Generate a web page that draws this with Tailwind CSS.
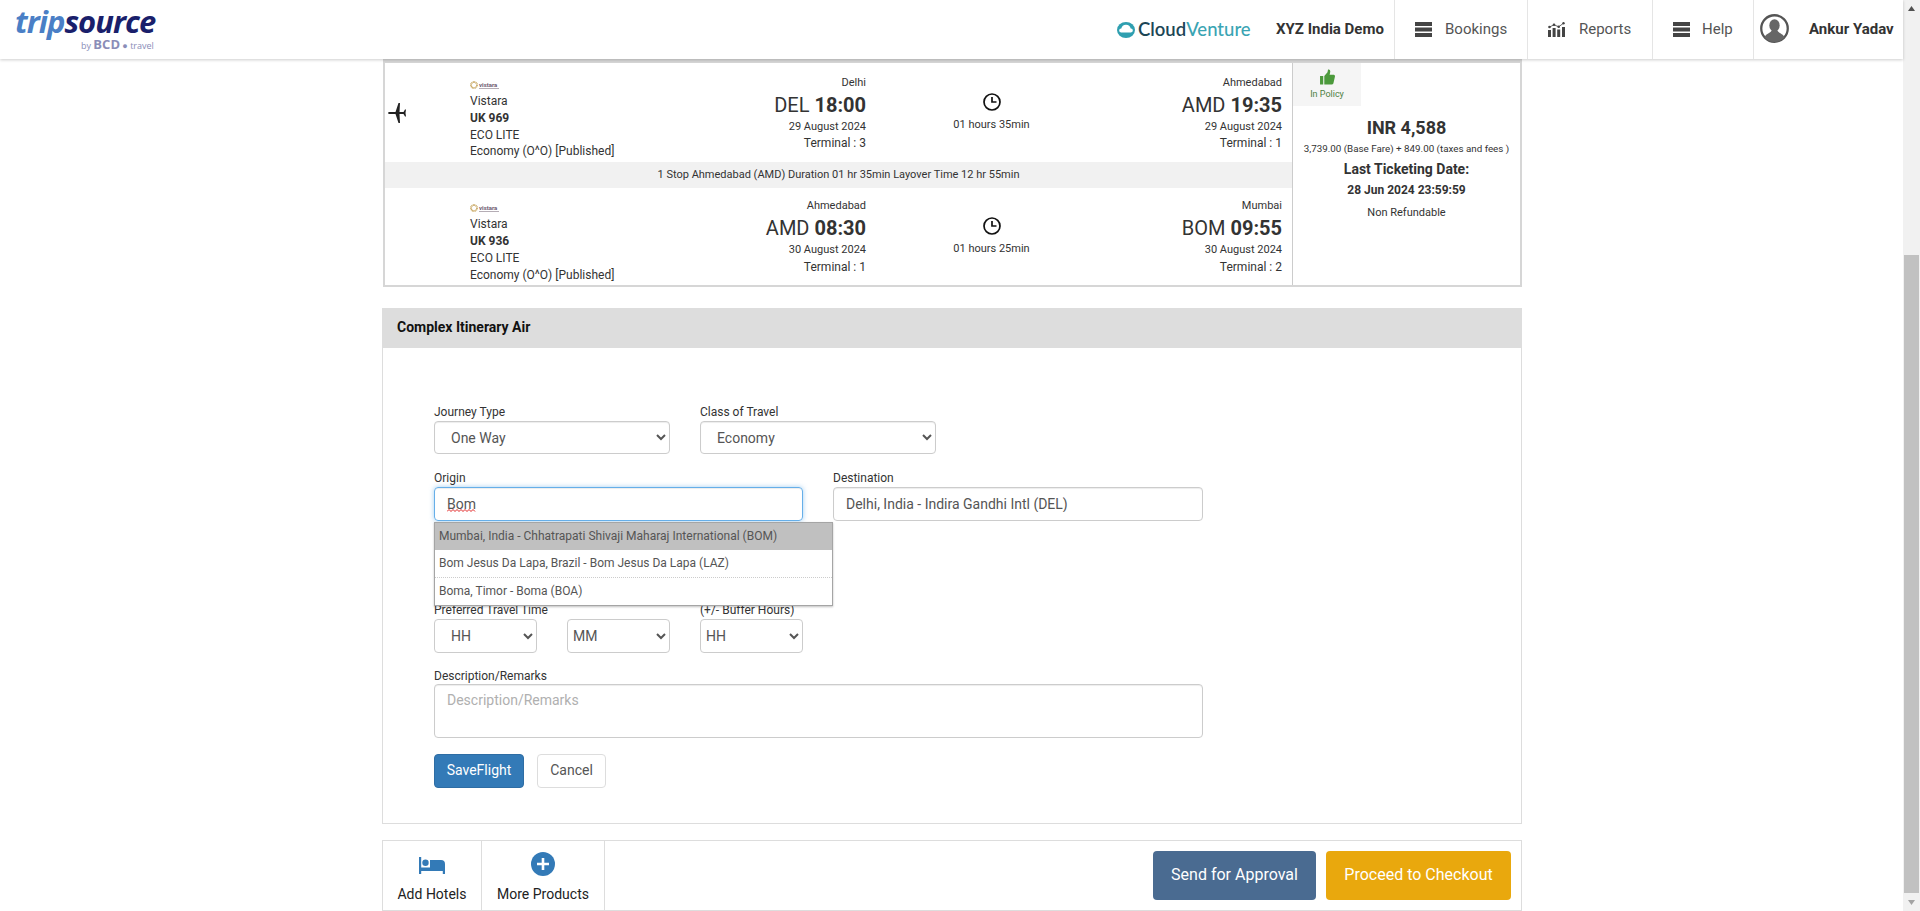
<!doctype html>
<html><head><meta charset="utf-8"><script src="https://cdn.jsdelivr.net/npm/@tailwindcss/browser@4"></script></head>
<body class="bg-white font-['Roboto',sans-serif] text-[#333] overflow-hidden">
<div class="h-[911px] w-[1920px] flex overflow-hidden">
<div class="w-[1903px] h-[911px] flex flex-col">
  <header class="h-[59px] shrink-0 flex shadow-[0_1px_3px_rgba(0,0,0,0.2)] bg-white relative z-10">
    <div class="ml-[15px] w-[140px] pt-[1px] flex flex-col">
      <div class="font-['Open_Sans'] italic font-bold text-[31px] leading-[40px] tracking-[-1px] text-[#1a1f6b] whitespace-nowrap"><span class="text-[#4a7fc6]">trip</span>source</div>
      <div class="text-[9px] leading-[10px] mt-[-2px] ml-[66px] text-[#8a8db8] font-['Open_Sans'] whitespace-nowrap">by <b class="text-[13px]">BCD</b> ● travel</div>
    </div>
    <div class="ml-auto flex items-center h-full">
      <svg class="w-[18px] h-[16px] mr-[3px]" viewBox="0 0 18 16"><ellipse cx="9" cy="8" rx="9" ry="8" fill="#2f9fb0"/><path d="M4 10.500a2 2 0 0 1 .3-4 4.800 4.800 0 0 1 9.400 0 2 2 0 0 1 .3 4z" fill="#fff"/></svg>
      <span class="font-['Lato'] font-semibold text-[18.500px] leading-none text-[#1c4656] w-[122px] whitespace-nowrap">Cloud<span class="text-[#3aa4b3] font-medium">Venture</span></span>
      <span class="ml-[16px] w-[118px] font-bold text-[15px] text-[#333] whitespace-nowrap">XYZ India Demo</span>
      <div class="h-full w-[133px] border-l border-[#e5e5e5] flex items-center pl-[20px] text-[15px] text-[#555]"><svg class="w-[17px] h-[15px] mr-[13px]" viewBox="0 0 17 15" fill="#444"><rect width="17" height="4"/><rect y="5.500" width="17" height="4"/><rect y="11" width="17" height="4"/></svg>Bookings</div>
      <div class="h-full w-[125px] border-l border-[#e5e5e5] flex items-center pl-[20px] text-[15px] text-[#555]"><svg class="w-[17px] h-[15px] mr-[14px]" viewBox="0 0 17 15" fill="#444"><rect y="8" width="3" height="7"/><rect x="4.600" y="6" width="3" height="9"/><rect x="9.200" y="7.500" width="3" height="7.500"/><rect x="14" y="5" width="3" height="10"/><path d="M1.500 5 6 2.800 10.700 4.800 15.500 1.200" fill="none" stroke="#444" stroke-width=".8"/><circle cx="1.500" cy="5" r="1.300"/><circle cx="6" cy="2.800" r="1.300"/><circle cx="10.700" cy="4.800" r="1.300"/><circle cx="15.500" cy="1.200" r="1.200"/></svg>Reports</div>
      <div class="h-full w-[101px] border-l border-[#e5e5e5] flex items-center pl-[20px] text-[15px] text-[#555]"><svg class="w-[17px] h-[15px] mr-[12px]" viewBox="0 0 17 15" fill="#444"><rect width="17" height="4"/><rect y="5.500" width="17" height="4"/><rect y="11" width="17" height="4"/></svg>Help</div>
      <div class="h-full w-[150px] border-l border-[#e5e5e5] flex items-center pl-[6px]"><svg class="w-[29px] h-[29px] mr-[20px] mt-[-2px]" viewBox="0 0 28 28"><circle cx="14" cy="14" r="12.800" fill="#fff" stroke="#555" stroke-width="2.200"/><ellipse cx="14" cy="11" rx="5" ry="6" fill="#666"/><path d="M4.300 22.500C6 18.500 11 18.500 11.500 15h5C17 18.500 22 18.500 23.700 22.500A12.800 12.800 0 0 1 4.300 22.500z" fill="#666"/></svg><span class="font-bold text-[15px] text-[#333] whitespace-nowrap">Ankur Yadav</span></div>
    </div>
  </header>

  <main class="w-[1140px] ml-[382px] flex flex-col">
    <!-- flight card -->
    <div class="h-[228px] ml-[1px] w-[1139px] border-2 border-t-[4px] border-[#d6d6d6] flex">
      <div class="w-[907px] flex flex-col">
        <!-- leg 1 -->
        <div class="h-[99px] flex">
          <div class="w-[85px] pl-[3px] flex items-center"><svg class="w-[19px] h-[20px]" viewBox="0 0 19 20" fill="#222"><path d="M0 10C0 9.300 1 9 2 9H7.500L10.500 0H12L11.500 9H15.500L17 6.500H18L17.500 10L18 13.500H17L15.500 11H11.500L12 20H10.500L7.500 11H2C1 11 0 10.700 0 10z"/></svg></div>
          <div class="w-[310px] pt-[16px] text-[12px] leading-[16.600px]">
            <div class="h-[12px] flex items-center gap-[1px]"><svg class="w-[8px] h-[8px]" viewBox="0 0 8 8"><circle cx="4" cy="4" r="3" fill="none" stroke="#c9a864" stroke-width="1.800" stroke-dasharray="1 .4"/></svg><div class="flex flex-col"><span class="text-[6px] leading-[5px] text-[#6d5a70] font-bold">vistara</span><span class="h-px mt-[1px] w-[20px] bg-[#b5adb5]"></span></div></div>
            <div class="mt-[2.400px]">Vistara</div><div class="font-bold">UK 969</div><div>ECO LITE</div><div class="whitespace-nowrap">Economy (O^O) [Published]</div>
          </div>
          <div class="w-[86px] pt-[12px] text-right whitespace-nowrap flex flex-col items-end">
            <div class="text-[11px] leading-[15px]">Delhi</div>
            <div class="text-[20px] leading-[30px]">DEL <b>18:00</b></div>
            <div class="text-[11px] leading-[14px]">29 August 2024</div>
            <div class="text-[12px] leading-[18px]">Terminal : 3</div>
          </div>
          <div class="w-[251px] pt-[30px] flex flex-col items-center">
            <svg class="w-[18px] h-[18px]" viewBox="0 0 18 18" fill="none" stroke="#111" stroke-width="1.700"><circle cx="9" cy="9" r="8"/><path d="M9 4v5h4.500"/></svg>
            <div class="mt-[6px] text-[11px] leading-[16px]">01 hours 35min</div>
          </div>
          <div class="w-[165px] pt-[12px] text-right whitespace-nowrap">
            <div class="text-[11px] leading-[15px]">Ahmedabad</div>
            <div class="text-[20px] leading-[30px]">AMD <b>19:35</b></div>
            <div class="text-[11px] leading-[14px]">29 August 2024</div>
            <div class="text-[12px] leading-[18px]">Terminal : 1</div>
          </div>
        </div>
        <div class="h-[26px] bg-[#f1f1f1] flex items-center justify-center text-[11px] whitespace-nowrap">1 Stop Ahmedabad (AMD) Duration 01 hr 35min Layover Time 12 hr 55min</div>
        <!-- leg 2 -->
        <div class="h-[97px] flex">
          <div class="w-[85px]"></div>
          <div class="w-[310px] pt-[14px] text-[12px] leading-[16.800px]">
            <div class="h-[12px] flex items-center gap-[1px]"><svg class="w-[8px] h-[8px]" viewBox="0 0 8 8"><circle cx="4" cy="4" r="3" fill="none" stroke="#c9a864" stroke-width="1.800" stroke-dasharray="1 .4"/></svg><div class="flex flex-col"><span class="text-[6px] leading-[5px] text-[#6d5a70] font-bold">vistara</span><span class="h-px mt-[1px] w-[20px] bg-[#b5adb5]"></span></div></div>
            <div class="mt-[2.400px]">Vistara</div><div class="font-bold">UK 936</div><div>ECO LITE</div><div class="whitespace-nowrap">Economy (O^O) [Published]</div>
          </div>
          <div class="w-[86px] pt-[10px] text-right whitespace-nowrap flex flex-col items-end">
            <div class="text-[11px] leading-[16px]">Ahmedabad</div>
            <div class="text-[20px] leading-[28px]">AMD <b>08:30</b></div>
            <div class="text-[11px] leading-[16px]">30 August 2024</div>
            <div class="text-[12px] leading-[18px]">Terminal : 1</div>
          </div>
          <div class="w-[251px] pt-[29px] flex flex-col items-center">
            <svg class="w-[18px] h-[18px]" viewBox="0 0 18 18" fill="none" stroke="#111" stroke-width="1.700"><circle cx="9" cy="9" r="8"/><path d="M9 4v5h4.500"/></svg>
            <div class="mt-[6px] text-[11px] leading-[16px]">01 hours 25min</div>
          </div>
          <div class="w-[165px] pt-[10px] text-right whitespace-nowrap">
            <div class="text-[11px] leading-[16px]">Mumbai</div>
            <div class="text-[20px] leading-[28px]">BOM <b>09:55</b></div>
            <div class="text-[11px] leading-[16px]">30 August 2024</div>
            <div class="text-[12px] leading-[18px]">Terminal : 2</div>
          </div>
        </div>
      </div>
      <!-- price -->
      <div class="flex-1 border-l border-[#ccc] flex flex-col">
        <div class="w-[68px] h-[43px] bg-[#f5f5f5] flex flex-col items-center pt-[6px]">
          <svg class="w-[15px] h-[16px]" viewBox="0 0 14 15" fill="#4c9a3c"><path d="M0 6.500h3v8H0zM4 6.500 7 3l.5-2.500Q10 0 9.500 3L9 5.500h4q1.500.5.8 2.500l-1.300 5.500q-.5 1-1.500 1H4z"/></svg>
          <div class="text-[9px] leading-[12px] mt-[3px] text-[#4d7f3f] whitespace-nowrap">In Policy</div>
        </div>
        <div class="flex flex-col items-center whitespace-nowrap">
          <div class="mt-[9px] text-[18px] leading-[26px] font-bold">INR 4,588</div>
          <div class="mt-[1px] text-[9.800px] leading-[14px]">3,739.00 (Base Fare) + 849.00 (taxes and fees )</div>
          <div class="mt-[3px] text-[14px] leading-[20px] font-bold">Last Ticketing Date:</div>
          <div class="mt-[1px] text-[12px] leading-[20px] font-bold">28 Jun 2024 23:59:59</div>
          <div class="mt-[5px] text-[11px] leading-[16px]">Non Refundable</div>
        </div>
      </div>
    </div>

    <!-- section -->
    <section class="mt-[21px] flex flex-col">
      <div class="h-[40px] bg-[#dddddd] flex items-center pl-[15px] pb-[2px] text-[14px] font-bold text-[#111]">Complex Itinerary Air</div>
      <div class="h-[476px] border border-t-0 border-[#ddd] pl-[51px] pt-[56px] flex flex-col text-[12px] text-[#333]">
        <div class="flex gap-[30px]">
          <div class="w-[236px]"><label class="block leading-[16px]">Journey Type</label>
            <select class="mt-[1px] w-full h-[33px] border border-[#ccc] rounded-[4px] pl-[12px] text-[14px] text-[#555] shadow-[inset_0_1px_1px_rgba(0,0,0,0.075)]"><option>One Way</option></select></div>
          <div class="w-[236px]"><label class="block leading-[16px]">Class of Travel</label>
            <select class="mt-[1px] w-full h-[33px] border border-[#ccc] rounded-[4px] pl-[12px] text-[14px] text-[#555] shadow-[inset_0_1px_1px_rgba(0,0,0,0.075)]"><option>Economy</option></select></div>
        </div>
        <div class="flex gap-[30px] mt-[16px]">
          <div class="w-[369px] relative"><label class="block leading-[16px] mb-[1px]">Origin</label>
            <input value="Bom" spellcheck="false" class="block w-full h-[34px] border border-[#66afe9] rounded-[4px] px-[12px] text-[14px] text-[#555] shadow-[inset_0_1px_1px_rgba(0,0,0,0.075),0_0_5px_rgba(102,175,233,0.6)] outline-none">
            <svg class="absolute left-[13px] top-[39px] w-[29px] h-[3px]" viewBox="0 0 29 3" fill="none" stroke="#e02020" stroke-width="1"><path d="M0 2.500 2 .5 4 2.500 6 .5 8 2.500 10 .5 12 2.500 14 .5 16 2.500 18 .5 20 2.500 22 .5 24 2.500 26 .5 28 2.500"/></svg>
            <ul class="absolute z-20 left-0 top-[52px] w-[399px] h-[84px] bg-white border border-[#a5a5a5] shadow-[0_1px_2px_rgba(0,0,0,0.25)] text-[12px] text-[#555] whitespace-nowrap">
              <li class="h-[27px] bg-[#c0c0c0] flex items-center pl-[4px] pb-[2px]">Mumbai, India - Chhatrapati Shivaji Maharaj International (BOM)</li>
              <li class="h-[28px] border-b border-dotted border-[#ccc] flex items-center pl-[4px] pb-[2px]">Bom Jesus Da Lapa, Brazil - Bom Jesus Da Lapa (LAZ)</li>
              <li class="h-[27px] flex items-center pl-[4px] pb-[2px]">Boma, Timor - Boma (BOA)</li>
            </ul>
          </div>
          <div class="w-[370px]"><label class="block leading-[16px] mb-[1px]">Destination</label>
            <input value="Delhi, India - Indira Gandhi Intl (DEL)" class="block w-full h-[34px] border border-[#ccc] rounded-[4px] px-[12px] text-[14px] text-[#555] shadow-[inset_0_1px_1px_rgba(0,0,0,0.075)] outline-none"></div>
        </div>
        <div class="flex mt-[81px]">
          <div class="w-[103px]"><label class="block leading-[16px] mb-[1px] whitespace-nowrap">Preferred Travel Time</label>
            <select class="w-full h-[34px] border border-[#ccc] rounded-[4px] pl-[12px] text-[14px] text-[#555]"><option>HH</option></select></div>
          <div class="w-[103px] ml-[30px] pt-[17px]">
            <select class="w-full h-[34px] border border-[#ccc] rounded-[4px] pl-[1px] text-[14px] text-[#555]"><option>MM</option></select></div>
          <div class="w-[103px] ml-[30px]"><label class="block leading-[16px] mb-[1px] whitespace-nowrap">(+/- Buffer Hours)</label>
            <select class="w-full h-[34px] border border-[#ccc] rounded-[4px] pl-[1px] text-[14px] text-[#555]"><option>HH</option></select></div>
        </div>
        <div class="w-[769px] mt-[15px]"><label class="block leading-[16px]">Description/Remarks</label>
          <textarea placeholder="Description/Remarks" class="block w-full h-[54px] border border-[#ccc] rounded-[4px] px-[12px] py-[5px] text-[14px] leading-[20px] text-[#555] placeholder:text-[#b0b0b0] resize-none outline-none shadow-[inset_0_1px_1px_rgba(0,0,0,0.075)]"></textarea></div>
        <div class="flex gap-[13px] mt-[16px]">
          <button class="w-[90px] h-[34px] bg-[#337ab7] border border-[#2e6da4] rounded-[4px] text-white text-[14px] pb-[1px]">SaveFlight</button>
          <button class="w-[69px] h-[34px] bg-white border border-[#ddd] rounded-[4px] text-[#555] text-[14px] pb-[1px]">Cancel</button>
        </div>
      </div>
    </section>

    <!-- bottom bar -->
    <div class="mt-[16px] h-[71px] border border-[#ddd] flex items-stretch">
      <div class="w-[99px] border-r border-[#ddd] flex flex-col items-center pt-[16px]">
        <svg class="w-[26px] h-[17px]" viewBox="0 0 26 17" fill="#337ab7"><path d="M0 0h2.200v10.500H11V3h11a4 4 0 0 1 4 4v10h-2.200v-3H2.200v3H0z"/><circle cx="6.500" cy="5.800" r="3.200"/></svg>
        <div class="mt-[10px] text-[14px] leading-[20px] text-[#222] whitespace-nowrap">Add Hotels</div>
      </div>
      <div class="w-[123px] border-r border-[#ddd] flex flex-col items-center pt-[11px]">
        <svg class="w-[24px] h-[24px]" viewBox="0 0 24 24"><circle cx="12" cy="12" r="12" fill="#337ab7"/><path d="M12 6v12M6 12h12" stroke="#fff" stroke-width="2.600"/></svg>
        <div class="mt-[8px] text-[14px] leading-[20px] text-[#222] whitespace-nowrap">More Products</div>
      </div>
      <div class="ml-auto flex items-center gap-[10px] pr-[10px]">
        <button class="w-[163px] h-[49px] bg-[#4a6b91] rounded-[4px] text-white text-[16px] pb-[2px]">Send for Approval</button>
        <button class="w-[185px] h-[49px] bg-[#e9a80d] rounded-[4px] text-white text-[16px] pb-[2px]">Proceed to Checkout</button>
      </div>
    </div>
  </main>
</div>
<!-- scrollbar -->
<div class="w-[17px] h-[911px] bg-[#f1f1f1] flex flex-col items-center">
  <svg class="w-[17px] h-[17px] shrink-0" viewBox="0 0 17 17" fill="#505050"><path d="M8.500 6 12 11H5z"/></svg>
  <div class="w-[15px] h-[638px] mt-[238px] bg-[#c1c1c1] shrink-0"></div>
  <svg class="w-[17px] h-[17px] shrink-0 mt-[1px]" viewBox="0 0 17 17" fill="#a3a3a3"><path d="M8.500 11 12 6H5z"/></svg>
</div>
</div>
</body></html>
